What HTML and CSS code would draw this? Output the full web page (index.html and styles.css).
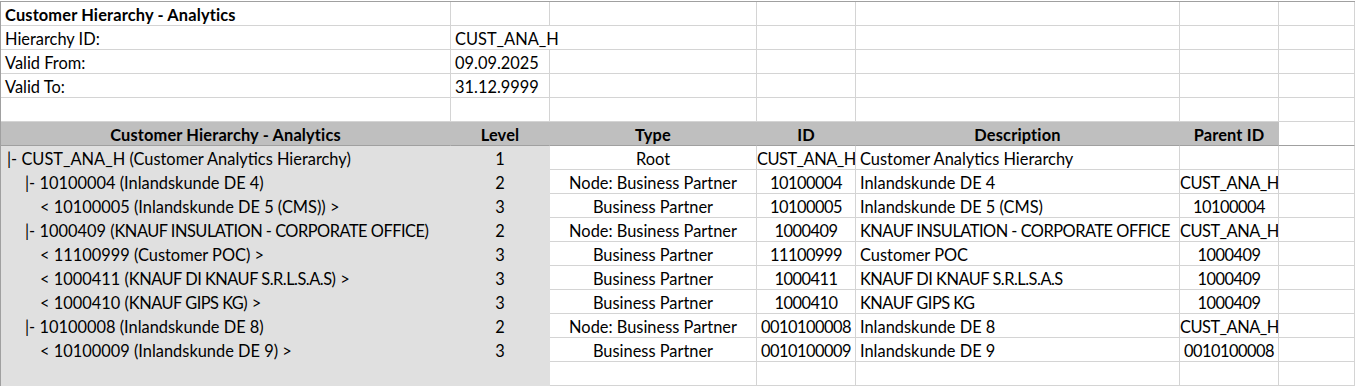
FILE: index.html
```html
<!DOCTYPE html>
<html>
<head>
<meta charset="utf-8">
<link rel="stylesheet" href="styles.css">
</head>
<body>
<div class="sheet">
  <div class="row"><div class="c b">Customer Hierarchy - Analytics</div><div class="c"></div><div class="c"></div><div class="c"></div><div class="c"></div><div class="c"></div><div class="c"></div></div>
  <div class="row"><div class="c">Hierarchy ID:</div><div class="c span2">CUST_ANA_H</div><div class="c"></div><div class="c"></div><div class="c"></div><div class="c"></div></div>
  <div class="row"><div class="c">Valid From:</div><div class="c">09.09.2025</div><div class="c"></div><div class="c"></div><div class="c"></div><div class="c"></div><div class="c"></div></div>
  <div class="row"><div class="c">Valid To:</div><div class="c">31.12.9999</div><div class="c"></div><div class="c"></div><div class="c"></div><div class="c"></div><div class="c"></div></div>
  <div class="row"><div class="c"></div><div class="c"></div><div class="c"></div><div class="c"></div><div class="c"></div><div class="c"></div><div class="c"></div></div>

  <div class="row head">
    <div class="c h">Customer Hierarchy - Analytics</div>
    <div class="c h">Level</div>
    <div class="c h">Type</div>
    <div class="c h">ID</div>
    <div class="c h">Description</div>
    <div class="c h">Parent ID</div>
    <div class="c"></div>
  </div>

  <div class="row data">
    <div class="c g l1">|- CUST_ANA_H (Customer Analytics Hierarchy)</div><div class="c g ctr">1</div>
    <div class="c ctr">Root</div><div class="c ctr num">CUST_ANA_H</div><div class="c">Customer Analytics Hierarchy</div><div class="c ctr num"></div><div class="c"></div>
  </div>
  <div class="row data">
    <div class="c g l2">|- 10100004 (Inlandskunde DE 4)</div><div class="c g ctr">2</div>
    <div class="c ctr">Node: Business Partner</div><div class="c ctr num">10100004</div><div class="c">Inlandskunde DE 4</div><div class="c ctr num">CUST_ANA_H</div><div class="c"></div>
  </div>
  <div class="row data">
    <div class="c g l3">&lt; 10100005 (Inlandskunde DE 5 (CMS)) &gt;</div><div class="c g ctr">3</div>
    <div class="c ctr">Business Partner</div><div class="c ctr num">10100005</div><div class="c">Inlandskunde DE 5 (CMS)</div><div class="c ctr num">10100004</div><div class="c"></div>
  </div>
  <div class="row data">
    <div class="c g l2">|- 1000409 (<span class="caps">KNAUF INSULATION - CORPORATE OFFICE</span>)</div><div class="c g ctr">2</div>
    <div class="c ctr">Node: Business Partner</div><div class="c ctr num">1000409</div><div class="c caps">KNAUF INSULATION - CORPORATE OFFICE</div><div class="c ctr num">CUST_ANA_H</div><div class="c"></div>
  </div>
  <div class="row data">
    <div class="c g l3">&lt; 11100999 (Customer POC) &gt;</div><div class="c g ctr">3</div>
    <div class="c ctr">Business Partner</div><div class="c ctr num">11100999</div><div class="c">Customer POC</div><div class="c ctr num">1000409</div><div class="c"></div>
  </div>
  <div class="row data">
    <div class="c g l3">&lt; 1000411 (<span class="caps">KNAUF DI KNAUF S.R.L.S.A.S</span>) &gt;</div><div class="c g ctr">3</div>
    <div class="c ctr">Business Partner</div><div class="c ctr num">1000411</div><div class="c caps">KNAUF DI KNAUF S.R.L.S.A.S</div><div class="c ctr num">1000409</div><div class="c"></div>
  </div>
  <div class="row data">
    <div class="c g l3">&lt; 1000410 (<span class="caps">KNAUF GIPS KG</span>) &gt;</div><div class="c g ctr">3</div>
    <div class="c ctr">Business Partner</div><div class="c ctr num">1000410</div><div class="c caps">KNAUF GIPS KG</div><div class="c ctr num">1000409</div><div class="c"></div>
  </div>
  <div class="row data">
    <div class="c g l2">|- 10100008 (Inlandskunde DE 8)</div><div class="c g ctr">2</div>
    <div class="c ctr">Node: Business Partner</div><div class="c ctr num">0010100008</div><div class="c">Inlandskunde DE 8</div><div class="c ctr num">CUST_ANA_H</div><div class="c"></div>
  </div>
  <div class="row data">
    <div class="c g l3">&lt; 10100009 (Inlandskunde DE 9) &gt;</div><div class="c g ctr">3</div>
    <div class="c ctr">Business Partner</div><div class="c ctr num">0010100009</div><div class="c">Inlandskunde DE 9</div><div class="c ctr num">0010100008</div><div class="c"></div>
  </div>
  <div class="row data">
    <div class="c g"></div><div class="c g"></div>
    <div class="c"></div><div class="c"></div><div class="c"></div><div class="c"></div><div class="c"></div>
  </div>
</div>
</body>
</html>
```

FILE: styles.css
```css
html, body {
  margin: 0;
  padding: 0;
  background: #ffffff;
}
body {
  padding-top: 1px;
  font-family: Lato, "Liberation Sans", sans-serif;
  font-size: 16.4px;
  color: #000;
}
.sheet {
  border-top: 1px solid #a0a0a0;
  border-left: 1px solid #a0a0a0;
  width: 1354px;
  overflow: hidden;
}
.row {
  display: grid;
  grid-template-columns: 450px 99px 207px 99px 324px 99px 1fr;
}
.c {
  box-sizing: border-box;
  height: 24px;
  line-height: 25px;
  padding: 0 4px;
  border-right: 1px solid #d4d4d4;
  border-bottom: 1px solid #d4d4d4;
  white-space: nowrap;
  overflow: hidden;
  min-width: 0;
}
.span2 {
  grid-column: span 2;
}
.b {
  font-weight: 700;
  letter-spacing: 0.15px;
}
.head .h {
  background: #bfbfbf;
  border-right-color: #bfbfbf;
  font-weight: 700;
  letter-spacing: 0.15px;
  text-align: center;
}
.head .c {
  border-bottom-color: #a0a0a0;
}
.data .g {
  background: #e0e0e0;
  border-right-color: #e0e0e0;
  border-bottom-color: #e0e0e0;
}
.ctr {
  display: flex;
  justify-content: safe center;
  padding: 0;
}
.num {
  letter-spacing: -0.5px;
}
.caps {
  letter-spacing: -0.5px;
}
.l1 { padding-left: 6px; }
.l2 { padding-left: 24px; }
.l3 { padding-left: 39px; }
```
